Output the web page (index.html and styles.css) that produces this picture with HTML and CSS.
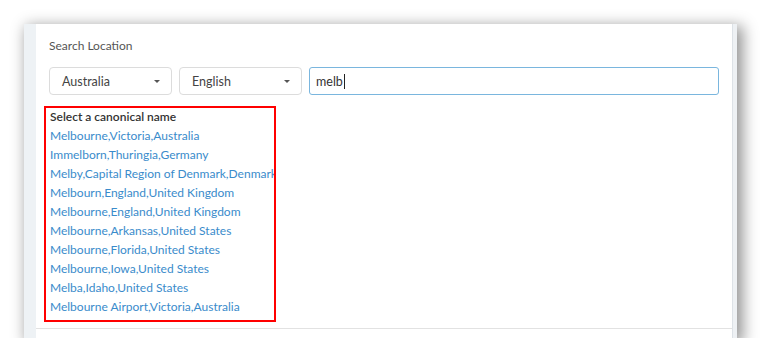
FILE: index.html
```html
<!DOCTYPE html>
<html lang="en">
<head>
  <meta charset="UTF-8">
  <title>Search Location</title>
  <link rel="stylesheet" href="styles.css">
</head>
<body>
  <div class="shot">
    <div class="strip-left"></div>

    <div class="panel">
      <div class="panel-body">
        <label class="field-label">Search Location</label>

        <div class="search-row">
          <div class="select-box">
            <span>Australia</span>
            <span class="caret"></span>
          </div>
          <div class="select-box">
            <span>English</span>
            <span class="caret"></span>
          </div>
          <div class="text-input">melb<span class="cursor"></span></div>
        </div>

        <!-- suggestions list -->
        <div class="suggestions">
          <p class="suggestions-title">Select a canonical name</p>
          <a href="#">Melbourne,Victoria,Australia</a>
          <a href="#">Immelborn,Thuringia,Germany</a>
          <a href="#">Melby,Capital Region of Denmark,Denmark</a>
          <a href="#">Melbourn,England,United Kingdom</a>
          <a href="#">Melbourne,England,United Kingdom</a>
          <a href="#">Melbourne,Arkansas,United States</a>
          <a href="#">Melbourne,Florida,United States</a>
          <a href="#">Melbourne,Iowa,United States</a>
          <a href="#">Melba,Idaho,United States</a>
          <a href="#">Melbourne Airport,Victoria,Australia</a>
        </div>
      </div>
    </div>

    <div class="strip-right"></div>
  </div>
</body>
</html>
```

FILE: styles.css
```css
/* General reset */
* {
  margin: 0;
  padding: 0;
  box-sizing: border-box;
}

body {
  background: #fff;
  font-family: Lato, "Open Sans", Arial, sans-serif;
  font-size: 12px;
  color: #333;
}

/* Screenshot frame with drop shadow */
.shot {
  display: flex;
  width: 713px;
  height: 314px;
  margin: 24px 0 0 24px;
  background: #fff;
  box-shadow: 4px 4px 14px 2px rgba(0, 0, 0, 0.42);
}

.strip-left {
  width: 12px;
  background: #eef2f5;
}

.strip-right {
  width: 5px;
  background: #eef1f4;
  border-left: 1px solid #dde2e7;
}

.panel {
  flex: 1;
  background: #fff;
  padding-bottom: 9px;
}

.panel-body {
  height: 100%;
  padding: 14px 13px 0 13px;
  border-bottom: 1px solid #e2e2e2;
}

.field-label {
  display: block;
  color: #555;
  line-height: 15px;
}

/* Dropdowns and search input */
.search-row {
  display: flex;
  gap: 7px;
  margin-top: 14px;
}

.select-box {
  display: flex;
  align-items: center;
  justify-content: space-between;
  width: 123px;
  height: 28px;
  padding: 0 11px 0 12px;
  border: 1px solid #dcdcdc;
  border-radius: 4px;
  color: #444;
  font-size: 12.5px;
}

.caret {
  width: 0;
  height: 0;
  border-left: 3px solid transparent;
  border-right: 3px solid transparent;
  border-top: 3px solid #555;
}

.text-input {
  display: flex;
  align-items: center;
  flex: 1;
  height: 28px;
  padding: 0 6px;
  border: 1px solid #7ab6de;
  border-radius: 3px;
  color: #333;
  font-size: 12.5px;
}

.cursor {
  display: inline-block;
  width: 1px;
  height: 15px;
  margin-left: 1px;
  background: #222;
}

/* Canonical name suggestions */
.suggestions {
  width: 232px;
  margin: 11px 0 0 -5px;
  padding: 1px 0 4px 4px;
  border: 2px solid #f00;
  overflow: hidden;
  white-space: nowrap;
}

.suggestions-title {
  line-height: 15px;
  margin-bottom: 2px;
  color: #333;
  font-weight: 600;
}

.suggestions a {
  display: block;
  line-height: 19px;
  color: #3a8bcb;
  text-decoration: none;
}
```
